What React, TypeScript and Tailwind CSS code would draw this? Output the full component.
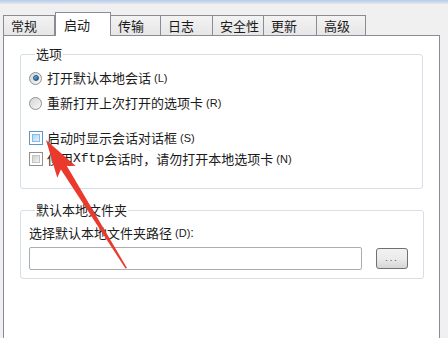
import React from "react";

const cjk = { fontFamily: '"Noto Sans CJK SC", "Noto Sans", sans-serif' };
const latin = { fontFamily: '"Liberation Sans", Arial, sans-serif' };
const mono = { fontFamily: '"Liberation Mono", monospace' };

const tabs = [
  { label: "常规", w: "w-[52px]" },
  { label: "启动", w: "w-[56px]", active: true },
  { label: "传输", w: "w-[51px]" },
  { label: "日志", w: "w-[53px]" },
  { label: "安全性", w: "w-[52px]" },
  { label: "更新", w: "w-[54px]" },
  { label: "高级", w: "w-[50px]" },
];

function Radio({ checked }: { checked?: boolean }) {
  return (
    <span className="w-[13px] h-[13px] rounded-full border border-[#8f9092] bg-gradient-to-br from-[#d4d4d4] to-[#f8f8f8] flex items-center justify-center shrink-0">
      {checked && <span className="w-[6px] h-[6px] rounded-full bg-gradient-to-br from-[#7cc0f0] to-[#16528c] border border-[#20508a]" />}
    </span>
  );
}

function Check({ hover }: { hover?: boolean }) {
  return hover ? (
    <span className="w-[14px] h-[14px] border border-[#5b97c8] bg-white p-[2px] shrink-0">
      <span className="block w-full h-full bg-gradient-to-br from-[#aed6f3] to-[#e4f3fc] border border-[#86bde6]" />
    </span>
  ) : (
    <span className="w-[14px] h-[14px] border border-[#8f9092] bg-white p-[2px] shrink-0">
      <span className="block w-full h-full bg-gradient-to-br from-[#cfcfcf] to-[#f4f4f4] border border-[#c4c4c4]" />
    </span>
  );
}

function Paren({ t }: { t: string }) {
  return (
    <span style={latin} className="text-[11px] ml-[3px]">
      ({t})
    </span>
  );
}

export default function App() {
  return (
    <div style={cjk} className="relative w-[448px] h-[338px] overflow-hidden bg-[#f0f0f0] text-[13px] text-[#1b1b1b] leading-[16px]">
      <div className="h-[4px] bg-gradient-to-b from-[#b7cbe4] to-[#dde8f4]" />

      {/* tabs */}
      <div className="flex items-end h-[31px] pl-[3px]">
        {tabs.map((t) =>
          t.active ? (
            <div key={t.label} className={`${t.w} h-[24px] relative z-10 -mb-px bg-white border border-b-0 border-[#898c95] pl-[8px] pt-[4px] text-[13px]`}>
              {t.label}
            </div>
          ) : (
            <div key={t.label} className={`${t.w} h-[20px] border border-b-0 border-[#898c95] -ml-px first:ml-0 bg-gradient-to-b from-[#f3f3f3] to-[#e6e6e6] pl-[7px] pt-[2px] text-[13px]`}>
              {t.label}
            </div>
          )
        )}
      </div>

      {/* panel */}
      <div className="ml-[3px] w-[437px] h-[320px] bg-white border border-[#898c95] pt-[11px] px-[16px]">
        <fieldset className="border border-[#d5dfe5] rounded-[3px] pl-[8px] pr-[8px] pb-[20px] h-[142px]">
          <legend className="ml-[6px] px-[1px] leading-[14px]">选项</legend>
          <div className="flex flex-col">
            <label className="flex items-center h-[16px] mt-[9px]">
              <Radio checked />
              <span className="ml-[5px]">打开默认本地会话</span>
              <Paren t="L" />
            </label>
            <label className="flex items-center h-[16px] mt-[9px]">
              <Radio />
              <span className="ml-[5px]">重新打开上次打开的选项卡</span>
              <Paren t="R" />
            </label>
            <label className="flex items-center h-[16px] mt-[19px]">
              <Check hover />
              <span className="ml-[4px]">启动时显示会话对话框</span>
              <Paren t="S" />
            </label>
            <label className="flex items-center h-[16px] mt-[5px]">
              <Check />
              <span className="ml-[4px]">使用</span>
              <span style={mono} className="text-[13px]">Xftp</span>
              <span>会话时，请勿打开本地选项卡</span>
              <Paren t="N" />
            </label>
          </div>
        </fieldset>

        <fieldset className="mt-[14px] border border-[#d5dfe5] rounded-[3px] pl-[8px] pr-[15px] pb-[8px]">
          <legend className="ml-[6px] px-[1px] leading-[14px]">默认本地文件夹</legend>
          <div className="mt-[8px] h-[16px] flex items-center">
            选择默认本地文件夹路径<Paren t="D" />
            <span style={latin}>:</span>
          </div>
          <div className="mt-[6px] flex items-center gap-[14px]">
            <div className="w-[333px] h-[23px] border border-[#abadb3] rounded-[2px] bg-white" />
            <button className="w-[32px] h-[21px] border border-[#707070] rounded-[3px] bg-gradient-to-b from-[#f2f2f2] via-[#ebebeb] to-[#d6d6d6] flex items-center justify-center text-[9px] text-[#444] tracking-[2px] leading-none" style={latin}>
              ...
            </button>
          </div>
        </fieldset>
      </div>

      {/* red annotation arrow */}
      <svg className="absolute inset-0 pointer-events-none" width="448" height="338" viewBox="0 0 448 338">
        <polygon
          points="46,140 75.7,166 66.7,165.8 127,268 125.5,268.5 60.9,169.6 57.3,177.8"
          fill="#ea3a2e"
        />
      </svg>
    </div>
  );
}
